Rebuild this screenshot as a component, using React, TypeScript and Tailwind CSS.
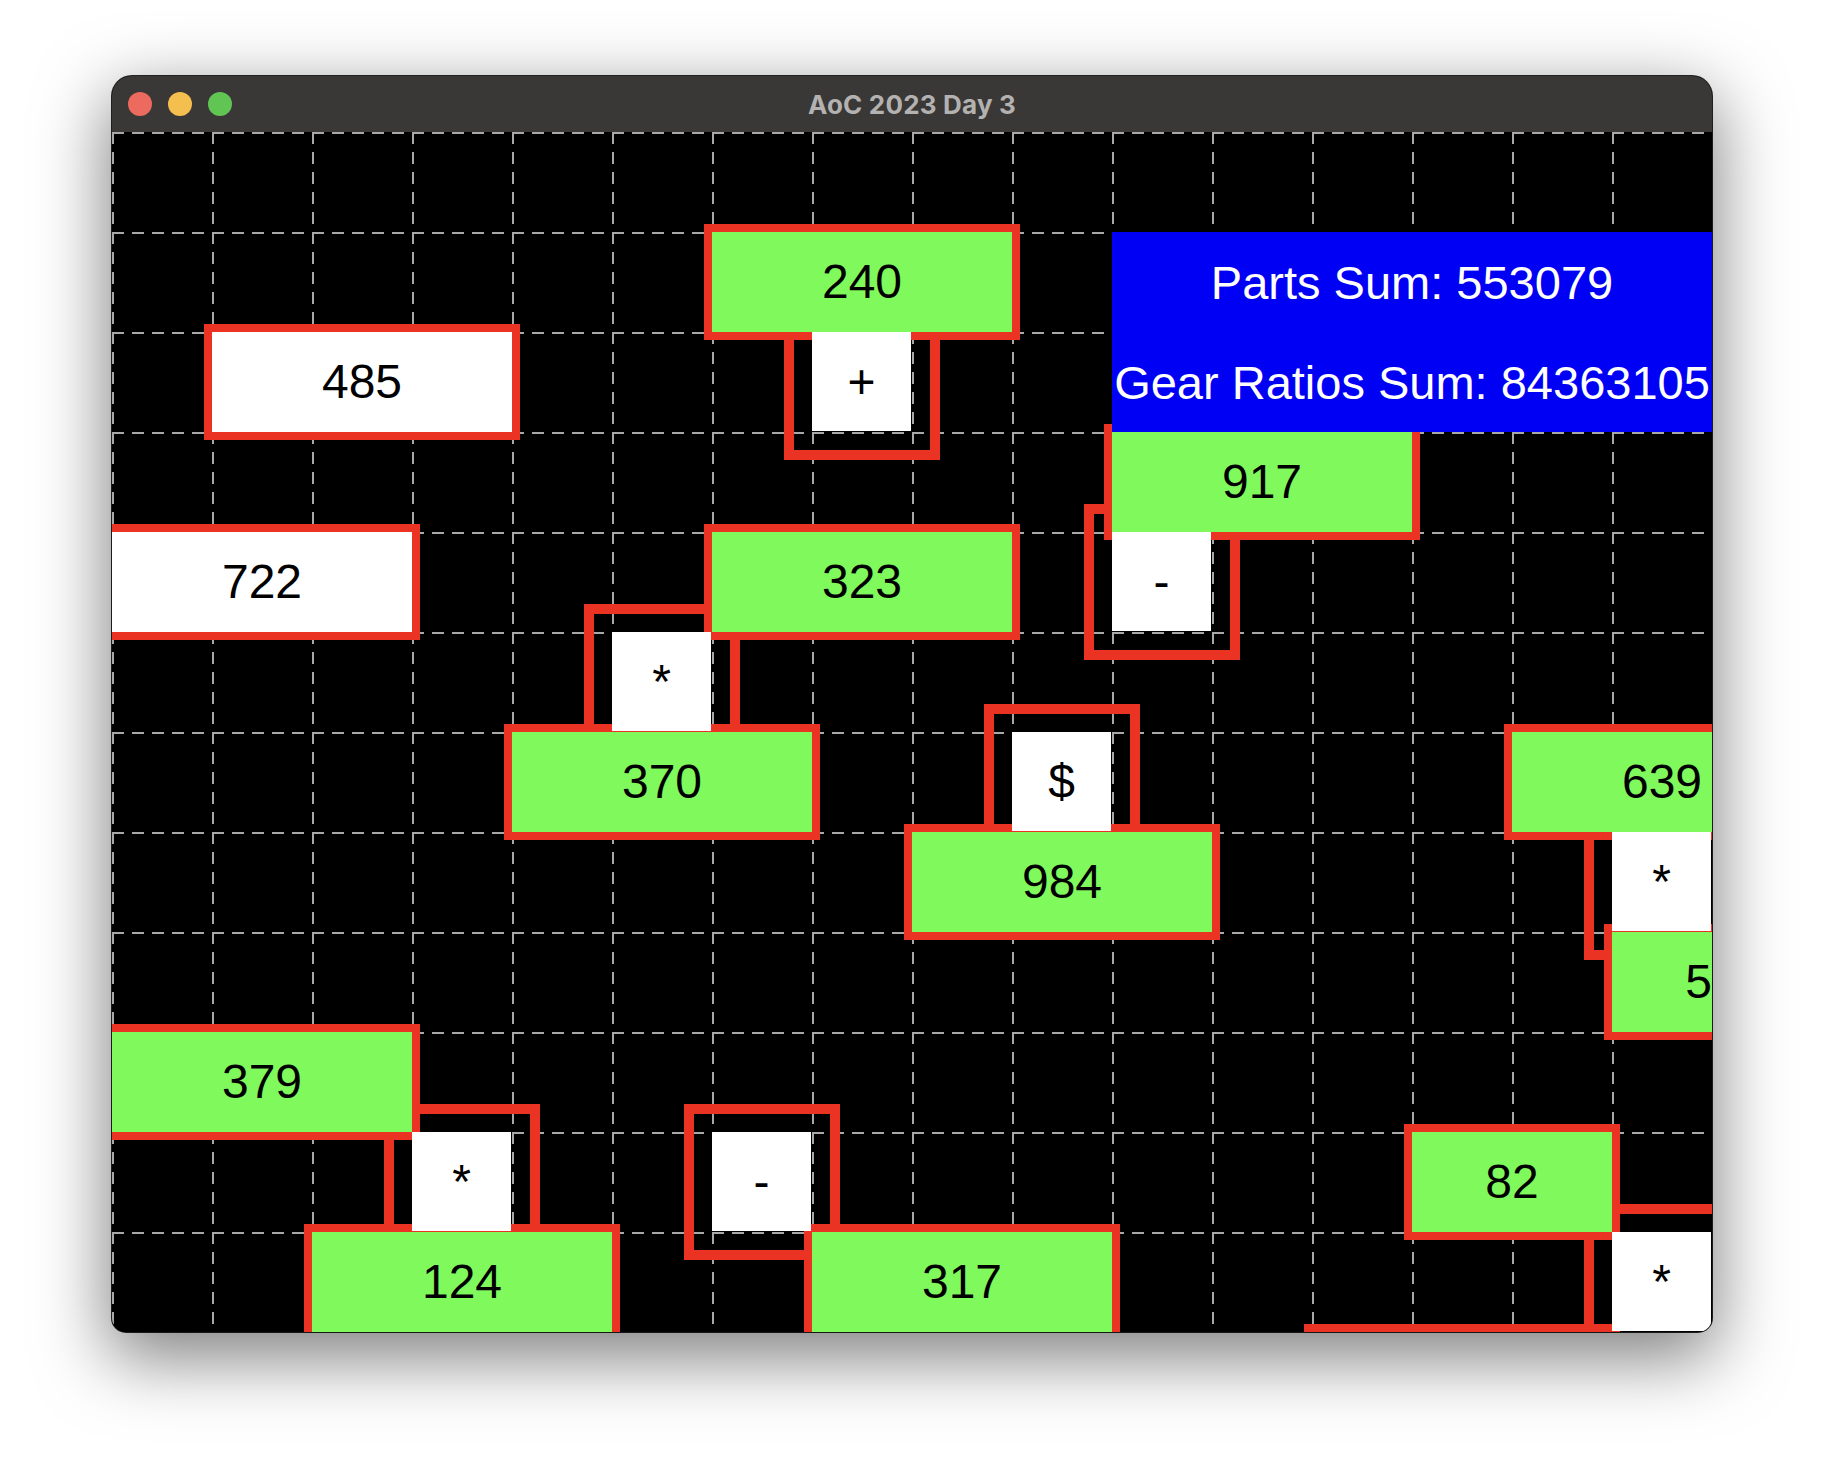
import React from "react";

type NumBox = { label: string; c: number; r: number; w: number; part: boolean };
type Sym = { s: string; c: number; r: number };

const numbers: NumBox[] = [
  { label: "485", c: 1, r: 2, w: 3, part: false },
  { label: "240", c: 6, r: 1, w: 3, part: true },
  { label: "917", c: 10, r: 3, w: 3, part: true },
  { label: "722", c: 0, r: 4, w: 3, part: false },
  { label: "323", c: 6, r: 4, w: 3, part: true },
  { label: "370", c: 4, r: 6, w: 3, part: true },
  { label: "639", c: 14, r: 6, w: 3, part: true },
  { label: "984", c: 8, r: 7, w: 3, part: true },
  { label: "59", c: 15, r: 8, w: 2, part: true },
  { label: "379", c: 0, r: 9, w: 3, part: true },
  { label: "82", c: 13, r: 10, w: 2, part: true },
  { label: "124", c: 2, r: 11, w: 3, part: true },
  { label: "317", c: 7, r: 11, w: 3, part: true },
  { label: "", c: 12, r: 12, w: 3, part: true },
];

const symbols: Sym[] = [
  { s: "+", c: 7, r: 2 },
  { s: "-", c: 10, r: 4 },
  { s: "*", c: 5, r: 5 },
  { s: "$", c: 9, r: 6 },
  { s: "*", c: 15, r: 7 },
  { s: "*", c: 3, r: 10 },
  { s: "-", c: 6, r: 10 },
  { s: "*", c: 15, r: 11 },
];

const COLS = 16;
const ROWS = 12;

function Grid() {
  const v = Array.from({ length: COLS }, (_, i) => i);
  const h = Array.from({ length: ROWS }, (_, i) => i);
  return (
    <svg className="absolute left-0 top-0" width={1600} height={1200}>
      {v.map((i) => (
        <line
          key={"v" + i}
          x1={i * 100 + 1}
          y1={0}
          x2={i * 100 + 1}
          y2={1200}
          stroke="#a8a8a8"
          strokeWidth={2}
          strokeDasharray="12 8"
        />
      ))}
      {h.map((i) => (
        <line
          key={"h" + i}
          x1={0}
          y1={i * 100 + 1}
          x2={1600}
          y2={i * 100 + 1}
          stroke="#a8a8a8"
          strokeWidth={2}
          strokeDasharray="12 8"
        />
      ))}
    </svg>
  );
}

export default function App() {
  return (
    <div className="w-[1824px] h-[1480px] bg-white pt-[76px] pl-[112px] font-['Liberation_Sans',Arial,sans-serif]">
      <div className="w-[1600px] h-[1256px] flex flex-col rounded-t-[20px] rounded-b-[14px] overflow-hidden shadow-[0_0_0_1px_rgba(0,0,0,0.85),0_22px_70px_4px_rgba(0,0,0,0.5)] bg-black">
        {/* Title bar */}
        <div className="h-[56px] shrink-0 bg-[#3a3836] grid grid-cols-[1fr_auto_1fr] items-center">
          <div className="flex items-center gap-[16px] pl-[16px]">
            <div className="w-[24px] h-[24px] rounded-full bg-[#ed6a5e]" />
            <div className="w-[24px] h-[24px] rounded-full bg-[#f5bf4f]" />
            <div className="w-[24px] h-[24px] rounded-full bg-[#61c554]" />
          </div>
          <div className="text-[26px] font-bold text-[#b3b2b1] font-['Inter','Liberation_Sans',sans-serif] tracking-[0.2px]">
            AoC 2023 Day 3
          </div>
          <div />
        </div>
        {/* Canvas */}
        <div className="relative h-[1200px] w-[1600px] overflow-hidden bg-black">
          <Grid />
          {symbols.map((s, i) => (
            <div
              key={"o" + i}
              className="absolute w-[156px] h-[156px] border-[10px] border-[#ea3323]"
              style={{ left: s.c * 100 - 28, top: s.r * 100 - 28 }}
            />
          ))}
          {numbers.map((n, i) => (
            <div
              key={"n" + i}
              className={
                "absolute h-[116px] border-[8px] border-[#ea3323] flex items-center justify-center text-[48px] leading-none text-black whitespace-nowrap " +
                (n.part ? "bg-[#7ff95c]" : "bg-white")
              }
              style={{ left: n.c * 100 - 8, top: n.r * 100 - 8, width: n.w * 100 + 16 }}
            >
              {n.label}
            </div>
          ))}
          {symbols.map((s, i) => (
            <div
              key={"s" + i}
              className="absolute w-[99px] h-[99px] bg-white flex items-center justify-center text-[48px] leading-none text-black"
              style={{ left: s.c * 100, top: s.r * 100 }}
            >
              {s.s}
            </div>
          ))}
          <div className="absolute left-[1000px] top-[100px] w-[600px] h-[200px] bg-[#0000f5] flex flex-col text-white text-[47px] leading-none">
            <div className="h-[100px] flex items-center justify-center whitespace-nowrap">Parts Sum: 553079</div>
            <div className="h-[100px] flex items-center justify-center whitespace-nowrap">Gear Ratios Sum: 84363105</div>
          </div>
        </div>
      </div>
    </div>
  );
}
